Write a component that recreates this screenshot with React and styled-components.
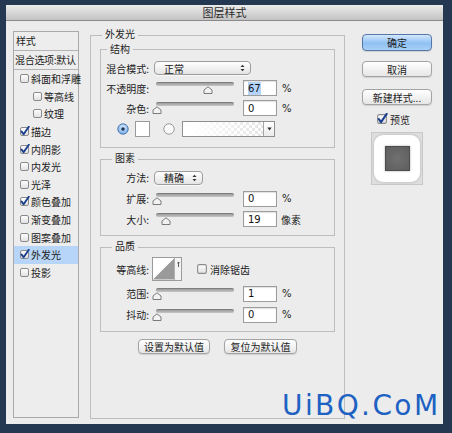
import React from "react"
import styled, { createGlobalStyle } from "styled-components"

const GlobalStyle = createGlobalStyle`
  html, body {
    margin: 0;
    padding: 0;
  }
  body {
    background: #253851;
    font-family: "Noto Sans CJK SC", "Noto Sans", sans-serif;
    color: #222;
  }
`

const Page = styled.div`
  position: relative;
  width: 452px;
  height: 433px;
  padding: 5px 0 0 6px;
  box-sizing: border-box;
  overflow: hidden;
`

const Dialog = styled.div`
  width: 437px;
  height: 419px;
  background: #ececec;
  display: flex;
  flex-direction: column;
`

const TitleBar = styled.div`
  height: 15px;
  border-bottom: 1px solid #8a8a8a;
  background: linear-gradient(#ebebeb, #c3c3c3);
  display: flex;
  align-items: center;
  justify-content: center;
  font-size: 11px;
  line-height: 15px;
  color: #2a2a2a;
`

const Body = styled.div`
  display: flex;
  align-items: flex-start;
  padding: 10px 0 0 7px;
`

/* ---------- sidebar ---------- */

const Sidebar = styled.div`
  width: 66px;
  height: 387px;
  box-sizing: border-box;
  border: 1px solid #a9a9a9;
  background: #ededed;
  font-size: 10px;
`

const SideHead = styled.div`
  height: 18px;
  line-height: 18px;
  padding-left: ${(p) => p.$pad}px;
  border-bottom: 1px solid #b3b3b3;
  letter-spacing: -0.3px;
  white-space: nowrap;
  overflow: hidden;
`

const SideItem = styled.div`
  height: 17.6px;
  display: flex;
  align-items: center;
  gap: 1px;
  padding-left: ${(p) => (p.$indent ? 18 : 5)}px;
  background: ${(p) => (p.$active ? "#b7d5f8" : "transparent")};
  white-space: nowrap;
`

/* ---------- main panel ---------- */

const Panel = styled.fieldset`
  margin: -3px 0 0 11px;
  padding: 0 9px;
  width: 255px;
  height: 391px;
  box-sizing: border-box;
  min-width: 0;
  border: 1px solid #bdbdbd;
`

const PanelLegend = styled.legend`
  font-size: 10px;
  line-height: 12px;
  padding: 0 3px 2px;
  margin-left: 2px;
`

const Group = styled.fieldset`
  margin: ${(p) => p.$top}px 0 0 0;
  padding: ${(p) => p.$pt}px 0 ${(p) => p.$pb}px 0;
  min-width: 0;
  border: 1px solid #bdbdbd;
`

const GroupLegend = styled.legend`
  font-size: 10px;
  line-height: 12px;
  padding: 0 3px ${(p) => p.$pb}px;
  margin-left: ${(p) => p.$ml}px;
`

const Row = styled.div`
  height: ${(p) => p.$h}px;
  display: flex;
  align-items: center;
`

const Label = styled.span`
  width: 48px;
  flex-shrink: 0;
  text-align: right;
  font-size: 10px;
  white-space: nowrap;
`

const SliderBox = styled.div`
  position: relative;
  margin-left: 7px;
  width: 78px;
  height: 14px;
`

const Track = styled.div`
  margin-top: 1px;
  height: 4px;
  border-radius: 2px;
  background: linear-gradient(#8e8e8e, #c6c6c6);
  box-shadow: inset 0 1px 0 rgba(0, 0, 0, 0.15);
`

const Thumb = styled.svg`
  position: absolute;
  top: 5px;
`

const NumField = styled.div`
  margin-left: 9px;
  width: 34px;
  height: 16px;
  box-sizing: border-box;
  border: 1px solid #9c9c9c;
  background: #fff;
  box-shadow: inset 0 1px 1px rgba(0, 0, 0, 0.12);
  display: flex;
  align-items: center;
  padding-left: 4px;
  font-family: "DejaVu Sans", "Liberation Sans", sans-serif;
  font-size: 10px;
  color: #111;
`

const Selected = styled.span`
  background: #b4d4fb;
  padding: 1px 0;
`

const Unit = styled.span`
  margin-left: ${(p) => p.$ml || 5}px;
  font-size: 10px;
  font-family: "DejaVu Sans", "Noto Sans CJK SC", sans-serif;
`

const Select = styled.div`
  margin-left: 5px;
  width: ${(p) => p.$w}px;
  height: 14px;
  box-sizing: border-box;
  border: 1px solid #9d9d9d;
  border-radius: 4px;
  background: linear-gradient(#ffffff, #e4e4e4);
  box-shadow: 0 1px 0 rgba(255, 255, 255, 0.7);
  display: flex;
  align-items: center;
  justify-content: space-between;
  padding: 0 5px 0 9px;
  font-size: 10px;
`

const ColorRow = styled(Row)`
  padding-left: 16px;
`

const Swatch = styled.div`
  margin-left: 6px;
  width: 15px;
  height: 16px;
  box-sizing: border-box;
  border: 1px solid #9a9a9a;
  background: #fff;
`

const GradientSwatch = styled.div`
  margin-left: 7px;
  width: 93px;
  height: 16px;
  box-sizing: border-box;
  border: 1px solid #8f8f8f;
  display: flex;
  background:
    linear-gradient(to right, #fff 10%, rgba(255, 255, 255, 0) 95%),
    repeating-conic-gradient(#e2e2e2 0% 25%, #fff 0% 50%) 0 0 / 6px 6px;
`

const DropPart = styled.div`
  margin-left: auto;
  width: 10px;
  border-left: 1px solid #a5a5a5;
  background: linear-gradient(#fff, #ececec);
  display: flex;
  align-items: center;
  justify-content: center;
`

const ContourBox = styled.div`
  margin-left: 3px;
  width: 30px;
  height: 24px;
  box-sizing: border-box;
  border: 1px solid #9a9a9a;
  background: #fff;
  display: flex;
`

const ContourDrop = styled.div`
  margin-left: auto;
  width: 7px;
  border-left: 1px solid #b0b0b0;
  background: #f4f4f4;
  display: flex;
  justify-content: center;
  padding-top: 4px;
  box-sizing: border-box;
`

const CheckLabel = styled.label`
  margin-left: 14px;
  display: flex;
  align-items: center;
  gap: 2px;
  font-size: 10px;
`

const BottomButtons = styled.div`
  margin-top: 7px;
  display: flex;
  justify-content: center;
  gap: 14px;
`

const Button = styled.div`
  width: ${(p) => p.$w}px;
  height: ${(p) => p.$h || 15}px;
  box-sizing: border-box;
  border: 1px solid ${(p) => (p.$primary ? "#5577a8" : "#a3a3a3")};
  border-radius: 4px;
  background: ${(p) =>
    p.$primary
      ? "linear-gradient(#d3e8fd, #8fc0f4 55%, #a9d0f8)"
      : "linear-gradient(#ffffff, #e6e6e6)"};
  box-shadow: 0 1px 1px rgba(0, 0, 0, 0.12);
  display: flex;
  align-items: center;
  justify-content: center;
  font-size: 10px;
  white-space: nowrap;
  color: #1c1c1c;
`

/* ---------- right column ---------- */

const Side = styled.div`
  margin: 3px 0 0 17px;
  width: 70px;
  display: flex;
  flex-direction: column;
`

const Spacer = styled.div`
  height: ${(p) => p.$h}px;
`

const PreviewCheck = styled.label`
  margin: 7px 0 0 14px;
  display: flex;
  align-items: center;
  gap: 2px;
  font-size: 10px;
  height: 14px;
`

const PreviewBox = styled.div`
  margin: 6px 0 0 9px;
  width: 52px;
  height: 53px;
  box-sizing: border-box;
  border: 1px solid #c9c9c9;
  background: #dedede;
  display: flex;
  align-items: center;
  justify-content: center;
`

const PreviewTile = styled.div`
  width: 46px;
  height: 47px;
  border-radius: 9px;
  background: #fff;
  box-shadow: 0 0 3px rgba(0, 0, 0, 0.2);
  display: flex;
  align-items: center;
  justify-content: center;
`

const PreviewSquare = styled.div`
  width: 25px;
  height: 25px;
  box-sizing: border-box;
  border: 1px solid #4d4d4d;
  background: radial-gradient(#707070, #5e5e5e);
  box-shadow: 0 0 2px rgba(0, 0, 0, 0.35);
`

const RadioWrap = styled.span`
  margin-left: 13px;
  display: flex;
`

const Watermark = styled.div`
  position: absolute;
  left: 282px;
  top: 392px;
  font-family: "DejaVu Sans", "Liberation Sans", sans-serif;
  font-size: 28px;
  line-height: 28px;
  letter-spacing: 2.4px;
  color: #1d62c3;
  white-space: nowrap;
`

/* ---------- small drawings ---------- */

const CheckBox = ({ checked, size = 11 }) => (
  <svg width={size} height={size} viewBox="0 0 11 11" style={{ flexShrink: 0 }}>
    <defs>
      <linearGradient id="cbg" x1="0" y1="0" x2="0" y2="1">
        <stop offset="0" stopColor="#ffffff" />
        <stop offset="1" stopColor="#e0e0e0" />
      </linearGradient>
    </defs>
    <rect x="1.5" y="1.5" width="8" height="8" rx="1.5" fill="url(#cbg)" stroke="#8a8a8a" />
    {checked && (
      <path d="M2.6 5.6 L4.6 8.3 L9.8 0.8" fill="none" stroke="#1b3f8e" strokeWidth="1.9" strokeLinecap="round" strokeLinejoin="round" />
    )}
  </svg>
)

const Radio = ({ on }) => (
  <svg width="12" height="12" viewBox="0 0 12 12" style={{ flexShrink: 0 }}>
    <defs>
      <radialGradient id="rbg" cx="0.5" cy="0.35" r="0.7">
        <stop offset="0" stopColor="#d8ecff" />
        <stop offset="1" stopColor="#6aa6e8" />
      </radialGradient>
    </defs>
    {on ? (
      <>
        <circle cx="6" cy="6" r="5.2" fill="url(#rbg)" stroke="#4f76ab" />
        <circle cx="6" cy="6" r="1.7" fill="#1d2f4d" />
      </>
    ) : (
      <circle cx="6" cy="6" r="5.2" fill="#fbfbfb" stroke="#9a9a9a" />
    )}
  </svg>
)

const UpDown = () => (
  <svg width="5" height="8" viewBox="0 0 5 8">
    <path d="M0.5 3 L2.5 0.8 L4.5 3 Z M0.5 5 L2.5 7.2 L4.5 5 Z" fill="#333" />
  </svg>
)

const SmallDown = () => (
  <svg width="5" height="4" viewBox="0 0 5 4">
    <path d="M0.3 0.5 L4.7 0.5 L2.5 3.5 Z" fill="#333" />
  </svg>
)

const Slider = ({ pos }) => (
  <SliderBox>
    <Track />
    <Thumb width="10" height="8" viewBox="0 0 10 8" style={{ left: Math.round(pos * 76) - 4 }}>
      <path d="M1 7.5 L1 4 L5 0.8 L9 4 L9 7.5 Z" fill="#f2f2f2" stroke="#7a7a7a" />
    </Thumb>
  </SliderBox>
)

const sideItems = [
  { text: "斜面和浮雕" },
  { text: "等高线", indent: true },
  { text: "纹理", indent: true },
  { text: "描边", checked: true },
  { text: "内阴影", checked: true },
  { text: "内发光" },
  { text: "光泽" },
  { text: "颜色叠加", checked: true },
  { text: "渐变叠加" },
  { text: "图案叠加" },
  { text: "外发光", checked: true, active: true },
  { text: "投影" },
]

const App = () => {
  return (
    <Page>
      <GlobalStyle />
      <Dialog>
        <TitleBar>图层样式</TitleBar>
        <Body>
          <Sidebar>
            <SideHead $pad={2}>样式</SideHead>
            <SideHead $pad={1}>混合选项:默认</SideHead>
            {sideItems.map((it) => (
              <SideItem key={it.text} $indent={it.indent} $active={it.active}>
                <CheckBox checked={it.checked} />
                {it.text}
              </SideItem>
            ))}
          </Sidebar>

          <Panel>
            <PanelLegend>外发光</PanelLegend>

            <Group $top={1} $pt={3} $pb={7}>
              <GroupLegend $ml={6} $pb={0}>结构</GroupLegend>
              <Row $h={20}>
                <Label>混合模式:</Label>
                <Select $w={97}>
                  正常
                  <UpDown />
                </Select>
              </Row>
              <Row $h={20}>
                <Label>不透明度:</Label>
                <Slider pos={0.67} />
                <NumField>
                  <Selected>67</Selected>
                </NumField>
                <Unit>%</Unit>
              </Row>
              <Row $h={20}>
                <Label>杂色:</Label>
                <Slider pos={0} />
                <NumField>0</NumField>
                <Unit>%</Unit>
              </Row>
              <ColorRow $h={22}>
                <Radio on />
                <Swatch />
                <RadioWrap>
                  <Radio />
                </RadioWrap>
                <GradientSwatch>
                  <DropPart>
                    <SmallDown />
                  </DropPart>
                </GradientSwatch>
              </ColorRow>
            </Group>

            <Group $top={4} $pt={1} $pb={6}>
              <GroupLegend $ml={11} $pb={2}>图素</GroupLegend>
              <Row $h={21}>
                <Label>方法:</Label>
                <Select $w={49}>
                  精确
                  <UpDown />
                </Select>
              </Row>
              <Row $h={21}>
                <Label>扩展:</Label>
                <Slider pos={0} />
                <NumField>0</NumField>
                <Unit>%</Unit>
              </Row>
              <Row $h={20}>
                <Label>大小:</Label>
                <Slider pos={0.12} />
                <NumField>19</NumField>
                <Unit $ml={4}>像素</Unit>
              </Row>
            </Group>

            <Group $top={4} $pt={1} $pb={6}>
              <GroupLegend $ml={11} $pb={2}>品质</GroupLegend>
              <Row $h={28}>
                <Label>等高线:</Label>
                <ContourBox>
                  <svg width="22" height="22" viewBox="0 0 22 22">
                    <path d="M0 22 L22 0 L22 22 Z" fill="#9a9a9a" />
                  </svg>
                  <ContourDrop>
                    <svg width="3" height="5" viewBox="0 0 3 5">
                      <path d="M1.5 0 L1.5 5 M0.3 1.2 L1.5 0 L2.7 1.2" stroke="#333" strokeWidth="0.8" fill="none" />
                    </svg>
                  </ContourDrop>
                </ContourBox>
                <CheckLabel>
                  <CheckBox size={12} />
                  消除锯齿
                </CheckLabel>
              </Row>
              <Row $h={21}>
                <Label>范围:</Label>
                <Slider pos={0} />
                <NumField>1</NumField>
                <Unit>%</Unit>
              </Row>
              <Row $h={21}>
                <Label>抖动:</Label>
                <Slider pos={0} />
                <NumField>0</NumField>
                <Unit>%</Unit>
              </Row>
            </Group>

            <BottomButtons>
              <Button $w={72}>设置为默认值</Button>
              <Button $w={73}>复位为默认值</Button>
            </BottomButtons>
          </Panel>

          <Side>
            <Button $w={70} $h={17} $primary>
              确定
            </Button>
            <Spacer $h={10} />
            <Button $w={70} $h={16}>
              取消
            </Button>
            <Spacer $h={12} />
            <Button $w={70} $h={16}>
              新建样式...
            </Button>
            <PreviewCheck>
              <CheckBox checked size={12} />
              预览
            </PreviewCheck>
            <PreviewBox>
              <PreviewTile>
                <PreviewSquare />
              </PreviewTile>
            </PreviewBox>
          </Side>
        </Body>
      </Dialog>
      <Watermark>UiBQ.CoM</Watermark>
    </Page>
  )
}

export default App
